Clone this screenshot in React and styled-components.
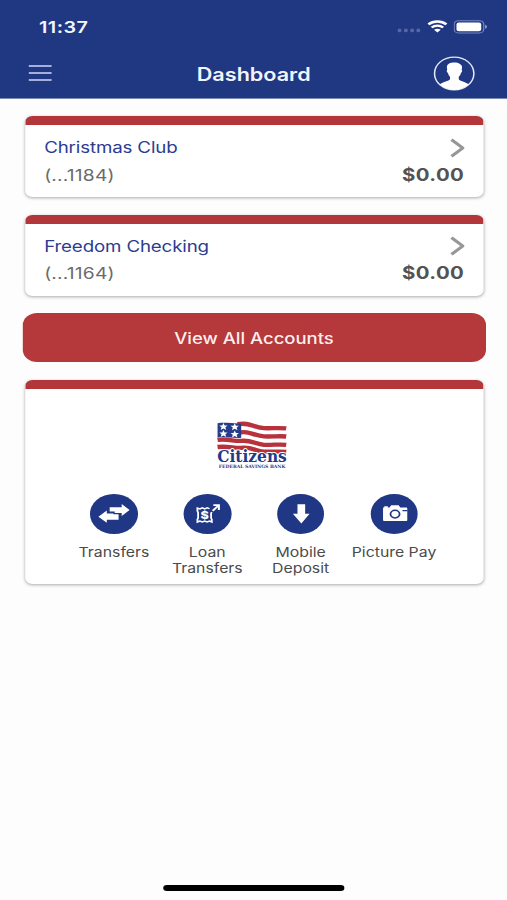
import React from "react";
import styled, { createGlobalStyle } from "styled-components";

const contas = [
  { nome: "Christmas Club", numero: "(...1184)", saldo: "$0.00" },
  { nome: "Freedom Checking", numero: "(...1164)", saldo: "$0.00" },
];

const atalhos = [
  { texto: "Transfers", icone: <IconeTransfers /> },
  { texto: "Loan Transfers", icone: <IconeLoan /> },
  { texto: "Mobile Deposit", icone: <IconeDeposit /> },
  { texto: "Picture Pay", icone: <IconeCamera /> },
];

const App = () => {
  return (
    <>
      <GlobalStyle />
      <Tela>
        <Topo>
          <BarraStatus>
            <Hora>11:37</Hora>
            <Indicadores>
              <Sinal />
              <Wifi />
              <Bateria />
            </Indicadores>
          </BarraStatus>
          <Navegacao>
            <BotaoMenu aria-label="Menu">
              <span />
              <span />
              <span />
            </BotaoMenu>
            <Titulo>Dashboard</Titulo>
            <Avatar />
          </Navegacao>
        </Topo>
        <Conteudo>
          {contas.map((conta) => (
            <Cartao key={conta.nome}>
              <Linha>
                <NomeConta>{conta.nome}</NomeConta>
                <Seta />
              </Linha>
              <Linha>
                <NumeroConta>{conta.numero}</NumeroConta>
                <Saldo>{conta.saldo}</Saldo>
              </Linha>
            </Cartao>
          ))}
          <BotaoContas>View All Accounts</BotaoContas>
          <CartaoBanco>
            <Logo />
            <Atalhos>
              {atalhos.map((atalho) => (
                <Atalho key={atalho.texto}>
                  <Circulo>{atalho.icone}</Circulo>
                  <p>{atalho.texto}</p>
                </Atalho>
              ))}
            </Atalhos>
          </CartaoBanco>
        </Conteudo>
        <Rodape>
          <BarraInicio />
        </Rodape>
      </Tela>
    </>
  );
};

export default App;

function Sinal() {
  return (
    <svg width="20" height="13" viewBox="0 0 20 13" fill="#5567a6">
      <rect x="0.3" y="8.6" width="3.2" height="3.6" rx="1.5" />
      <rect x="5.6" y="8.6" width="3.2" height="3.6" rx="1.5" />
      <rect x="10.8" y="8.6" width="3.2" height="3.6" rx="1.5" />
      <rect x="16" y="8.6" width="3.2" height="3.6" rx="1.5" />
    </svg>
  );
}

function Wifi() {
  return (
    <svg width="17" height="13" viewBox="0 0 17 13" fill="none" stroke="#fff">
      <path d="M1 4.4C5.2 .5 11.8 .5 16 4.4" strokeWidth="2.4" />
      <path d="M3.7 7.5C6.5 5 10.5 5 13.3 7.5" strokeWidth="2.3" />
      <path d="M5.7 9.8Q8.5 7.5 11.3 9.8L8.5 12.6Z" fill="#fff" stroke="none" />
    </svg>
  );
}

function Bateria() {
  return (
    <svg width="28" height="14" viewBox="0 0 28 14">
      <rect x="0.5" y="0.7" width="24.6" height="12.2" rx="3.4" fill="none" stroke="#7886bb" />
      <rect x="2.4" y="2.4" width="20.6" height="8.8" rx="2" fill="#fff" />
      <path d="M26.2 4.8Q27.9 5.5 27.9 6.8Q27.9 8.1 26.2 8.8Z" fill="#8b98c9" />
    </svg>
  );
}

function Avatar() {
  return (
    <svg width="35" height="35" viewBox="0 0 35 35">
      <circle cx="17.5" cy="17.5" r="16.4" fill="none" stroke="#e4e8f6" strokeWidth="1.3" />
      <path
        d="M17.8 6.5C14.6 6.4 11.4 7.8 11.4 11.2C11.4 12.4 11.6 13.2 11.7 13.8C11 14 11.2 16.5 12.3 16.9C12.6 18.5 13.2 19.8 14 20.7V23.2C13 25 8.4 25.6 5.4 28.3C8.6 32.1 12.7 34 17.5 34S26.4 32.1 29.6 28.3C26.6 25.6 22.3 25 21.3 23.2V20.7C22.2 19.8 22.8 18.5 23.1 16.9C24.2 16.5 24.4 14 23.7 13.8C24.4 11.2 24.2 8.8 22.2 7.9C21 6.8 19.4 6.5 17.8 6.5Z"
        fill="#fff"
      />
    </svg>
  );
}

function Seta() {
  return (
    <svg width="12" height="20" viewBox="0 0 12 20">
      <path d="M1.2 1.6L10.6 10L1.2 18.4" fill="none" stroke="#979797" strokeWidth="2.8" />
    </svg>
  );
}

function IconeTransfers() {
  return (
    <svg width="40" height="40" viewBox="0 0 40 40" fill="#fff">
      <path d="M16.4 13.2H26.4V9.9L33 16L26.4 22.1V19H20.6V17.4H16.4Z" />
      <path d="M23.8 20.2V25.8H14V28.8L7 22.7L14 16.6V19.4H19.5V20.2Z" />
    </svg>
  );
}

function IconeLoan() {
  return (
    <svg width="40" height="40" viewBox="0 0 40 40" fill="none" stroke="#fff">
      <path
        d="M21.6 14.6L19.6 13.9L17.6 14.9L15.6 13.9L13.6 14.9L11.5 14.1V17L12.1 18.6V24L11.5 25.4V28L13.6 27L15.6 28L17.6 27L19.6 28L21.6 27L23.5 28V25.4L22.9 24V19.2L23.5 18"
        strokeWidth="1.5"
      />
      <text
        x="17.5"
        y="24.6"
        textAnchor="middle"
        fill="#fff"
        stroke="none"
        fontFamily="Inter, sans-serif"
        fontWeight="800"
        fontSize="10.5"
      >
        $
      </text>
      <path d="M24.2 16.8L28.6 12" strokeWidth="1.8" />
      <path d="M24.8 11.1H29.4V16" strokeWidth="1.7" />
    </svg>
  );
}

function IconeDeposit() {
  return (
    <svg width="40" height="40" viewBox="0 0 40 40" fill="#fff">
      <path d="M16.9 10.2H23.3V19.8H27L20.1 29.4L13.1 19.8H16.9Z" />
    </svg>
  );
}

function IconeCamera() {
  return (
    <svg width="40" height="40" viewBox="0 0 40 40">
      <path
        d="M10.2 13.6H11.2V12.2H14.2V13.6H15.6L17 11.3H23.2L24.6 13.6H29.6Q30.4 13.6 30.4 14.4V26.2Q30.4 27 29.6 27H11.2Q10.2 27 10.2 26.2Z"
        fill="#fff"
      />
      <circle cx="20.2" cy="20.1" r="3.8" fill="none" stroke="#203785" strokeWidth="1.5" />
      <path d="M26.4 16.6H30.6" stroke="#203785" strokeWidth="1.2" />
    </svg>
  );
}

function Estrela({ x, y }) {
  return (
    <path
      transform={`translate(${x} ${y})`}
      d="M0 -3.7L1 -1.2L3.5 -1.2L1.6 .6L2.3 3.2L0 1.8L-2.3 3.2L-1.6 .6L-3.5 -1.2L-1 -1.2Z"
      fill="#fff"
    />
  );
}

function Logo() {
  return (
    <DesenhoLogo width="60" height="50" viewBox="0 0 60 50">
      {/* listras */}
      <g fill="none" stroke="#b7323c" strokeWidth="4.3">
        <path d="M18 3.2C28 .8 31 6.6 40 7.2C47 7.6 52 6.4 58.5 7.4" />
        <path d="M18 11.8C28 9.3 31 14.7 40 15.4C47 15.9 52 14.7 58.5 15.5" />
        <path d="M1.3 18.8C10 17.5 15 20.5 21 19.9C29 18.7 33 23.2 40 23.8C47 24.2 52 23 58.5 23.8" />
        <path d="M1.3 26C10 24.8 15 27.4 21 26.9C30 25.5 33 30.4 40 30.6C47 31.2 52 30 58.5 30.8" />
      </g>
      <path d="M1.3 2.2C8 .9 14 2.8 21 2.4V16.8C14 17.6 8 15.2 1.3 16.4Z" fill="#263c8a" />
      <Estrela x={6.2} y={5.7} />
      <Estrela x={15.6} y={6} />
      <Estrela x={6.2} y={12.7} />
      <Estrela x={15.6} y={13.2} />
      <text
        x="1"
        y="40.8"
        textLength="58"
        lengthAdjust="spacingAndGlyphs"
        fontFamily="'DejaVu Serif', serif"
        fontWeight="700"
        fontSize="16.4"
        fill="#243a88"
        stroke="#fff"
        strokeWidth="1.8"
        paintOrder="stroke"
      >
        Citizens
      </text>
      <text
        x="2.4"
        y="47.4"
        textLength="55.4"
        lengthAdjust="spacingAndGlyphs"
        fontFamily="'DejaVu Serif', serif"
        fontWeight="700"
        fontSize="4.6"
        fill="#243a88"
      >
        FEDERAL SAVINGS BANK
      </text>
    </DesenhoLogo>
  );
}

const GlobalStyle = createGlobalStyle`
  * {
    box-sizing: border-box;
  }
  body {
    margin: 0;
    background: #fdfdfd;
    overflow: hidden;
  }
  p {
    margin: 0;
  }
  svg {
    display: block;
    flex-shrink: 0;
  }
  button {
    border: 0;
    padding: 0;
    font-family: inherit;
  }
`;

/* a tela é desenhada em 422.5px e esticada na horizontal */
const Tela = styled.div`
  width: 422.5px;
  height: 900px;
  display: flex;
  flex-direction: column;
  transform: scaleX(1.2);
  transform-origin: 0 0;
  background: #fdfdfd;
  font-family: Inter, "Liberation Sans", sans-serif;
`;

const Topo = styled.header`
  height: 99px;
  background: #203782;
  border-bottom: 1px solid #7c89b5;
`;

const BarraStatus = styled.div`
  height: 48px;
  padding: 5px 16.8px 0 32.5px;
  display: flex;
  align-items: center;
  justify-content: space-between;
`;

const Hora = styled.p`
  font-size: 16.5px;
  font-weight: 600;
  letter-spacing: 0.4px;
  color: #f4f6fd;
`;

const Indicadores = styled.div`
  display: flex;
  align-items: center;
  gap: 5px;
`;

const Navegacao = styled.nav`
  height: 50px;
  padding: 0 26.4px 0 24.4px;
  display: grid;
  grid-template-columns: 35px 1fr 35px;
  align-items: center;
`;

const BotaoMenu = styled.button`
  width: 18.3px;
  display: flex;
  flex-direction: column;
  gap: 5px;
  background: none;

  span {
    height: 1.8px;
    background: #a4afdd;
  }
`;

const Titulo = styled.h1`
  margin: 2px 0 0 2.4px;
  text-align: center;
  font-size: 18px;
  font-weight: 600;
  color: #f1f4fd;
`;

const Conteudo = styled.main`
  flex: 1;
  padding: 16.8px 20px 0 20.8px;
  display: flex;
  flex-direction: column;
  gap: 17.8px;
`;

const Cartao = styled.section`
  height: 81px;
  padding: 9.4px 16px 0;
  border-top: 9px solid #b3373a;
  border-radius: 6px;
  background: #fff;
  box-shadow: 0 1px 3px rgba(0, 0, 0, 0.33);
`;

const CartaoBanco = styled(Cartao)`
  height: 204px;
  padding: 32px 0 0;
  display: flex;
  flex-direction: column;
  align-items: center;
`;

const DesenhoLogo = styled.svg`
  margin-right: 4px;
  overflow: visible;
`;

const Linha = styled.div`
  height: 27px;
  display: flex;
  align-items: center;
  justify-content: space-between;
`;

const NomeConta = styled.p`
  font-size: 15.6px;
  letter-spacing: -0.12px;
  color: #2c3c90;
`;

const NumeroConta = styled.p`
  font-size: 16px;
  letter-spacing: 0.16px;
  color: #6b6b6b;
`;

const Saldo = styled.p`
  font-size: 17px;
  font-weight: 700;
  letter-spacing: 0.3px;
  margin-right: -0.3px;
  color: #535353;
`;

const BotaoContas = styled.button`
  height: 48.4px;
  padding-top: 1px;
  margin: 0 -2px;
  border-radius: 12px;
  background: #b5383a;
  color: #fdeeee;
  font-size: 15.4px;
  font-weight: 500;
`;

const Atalhos = styled.div`
  margin-top: 23.5px;
  display: grid;
  grid-template-columns: repeat(4, 77.8px);
`;

const Atalho = styled.div`
  display: flex;
  flex-direction: column;
  align-items: center;

  p {
    margin-top: 10.6px;
    font-size: 13.2px;
    line-height: 16px;
    text-align: center;
    color: #4b4b4b;
  }
`;

const Circulo = styled.div`
  width: 39.6px;
  height: 39.6px;
  border-radius: 50%;
  background: #203785;
`;

const Rodape = styled.footer`
  height: 15px;
  display: flex;
  justify-content: center;
`;

const BarraInicio = styled.div`
  width: 151px;
  height: 5.5px;
  border-radius: 3px;
  background: #000;
`;
